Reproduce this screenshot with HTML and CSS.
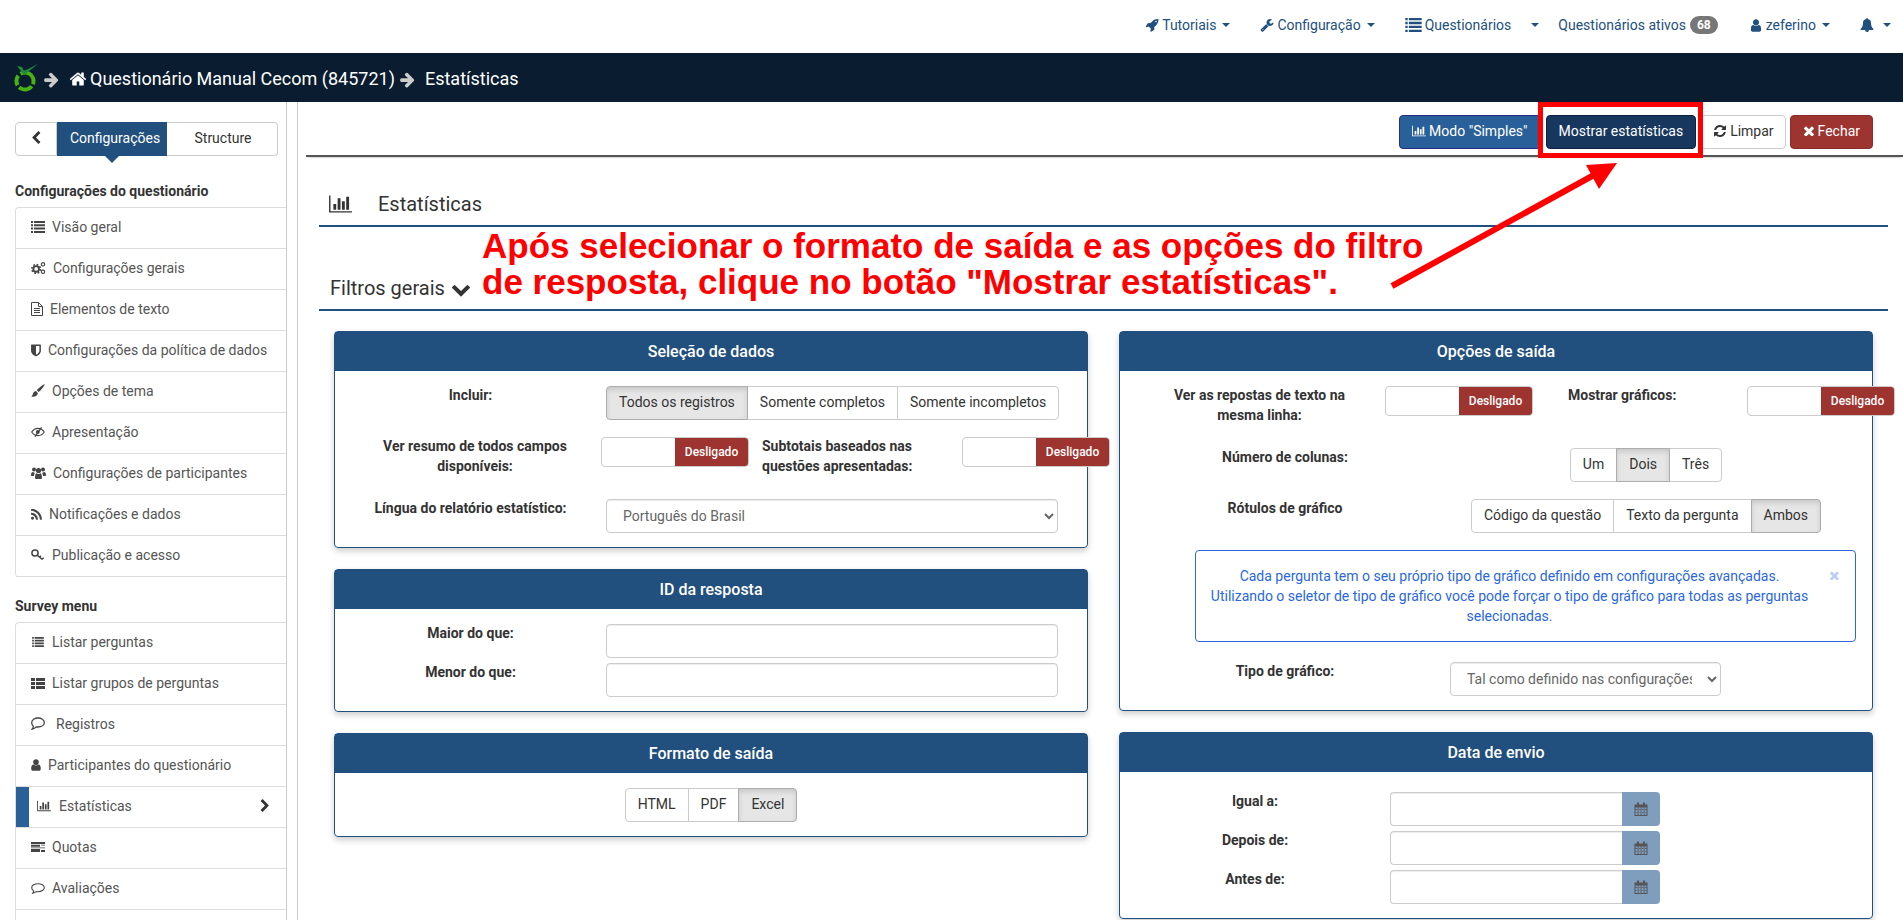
FILE: index.html
```html
<!DOCTYPE html>
<html lang="pt-br">

<head>
    <meta charset="UTF-8">
    <meta name="viewport" content="width=device-width, initial-scale=1.0">
    <title>Estatísticas</title>
    <link rel="stylesheet" href="styles.css">
</head>

<body>
    <svg class="icon-defs" aria-hidden="true">
        <symbol id="i-rocket" viewBox="0 0 1792 1792"><path d="M1504 448q0-40-28-68t-68-28-68 28-28 68 28 68 68 28 68-28 28-68zm224-288q0 249-75.5 430.5t-253.5 360.5q-81 80-195 176l-20 379q-2 16-16 26l-384 224q-7 4-16 4-12 0-23-9l-64-64q-13-14-8-32l85-276-281-281-276 85q-3 1-9 1-14 0-23-9l-64-64q-17-19-5-39l224-384q10-14 26-16l379-20q96-114 176-195 188-187 358-258t431-71q14 0 24 9.5t10 22.5z"/></symbol>
        <symbol id="i-wrench" viewBox="0 0 1792 1792"><path d="M448 1472q0-26-19-45t-45-19-45 19-19 45 19 45 45 19 45-19 19-45zm644-420l-682 682q-37 37-90 37-52 0-91-37l-106-108q-38-36-38-90 0-53 38-91l681-681q39 98 114.5 173.5t173.5 114.5zm634-435q0 39-23 106-47 134-164.5 217.5t-258.5 83.5q-185 0-316.5-131.5t-131.5-316.5 131.5-316.5 316.5-131.5q58 0 121.5 16.5t107.5 46.5q16 11 16 28t-16 28l-293 169v224l193 107q5-3 79-48.5t135.5-81 70.5-35.5q15 0 23.5 10t8.5 25z"/></symbol>
        <symbol id="i-list" viewBox="0 0 14 12"><path d="M0 0h2v2H0zM3 0h11v2H3zM0 3.300h2v2H0zM3 3.300h11v2H3zM0 6.600h2v2H0zM3 6.600h11v2H3zM0 10h2v2H0zM3 10h11v2H3z"/></symbol>
        <symbol id="i-th-list" viewBox="0 0 14 11"><path d="M0 0h4v3H0zM5 0h9v3H5zM0 4h4v3H0zM5 4h9v3H5zM0 8h4v3H0zM5 8h9v3H5z"/></symbol>
        <symbol id="i-user" viewBox="300 100 1200 1600"><path d="M1536 1399q0 109-62.500 187t-150.500 78h-854q-88 0-150.500-78t-62.500-187q0-85 8.500-160.500t31.500-152 58.500-131 94-89 134.500-34.500q131 128 313 128t313-128q76 0 134.500 34.500t94 89 58.500 131 31.500 152 8.500 160.500zm-256-887q0 159-112.500 271.500t-271.500 112.500-271.500-112.500-112.500-271.500 112.500-271.500 271.500-112.500 271.500 112.500 112.500 271.500z"/></symbol>
        <symbol id="i-bell" viewBox="0 0 1792 1792"><path d="M912 1696q0-16-16-16-59 0-101.500-42.500t-42.500-101.500q0-16-16-16t-16 16q0 73 51.500 124.500t124.500 51.500q16 0 16-16zm816-288q0 52-38 90t-90 38h-448q0 106-75 181t-181 75-181-75-75-181h-448q-52 0-90-38t-38-90q50-42 91-88t85-119.500 74.500-158.500 50-206 19.500-260q0-152 117-282.500t307-158.500q-8-19-8-39 0-40 28-68t68-28 68 28 28 68q0 20-8 39 190 28 307 158.500t117 282.500q0 139 19.500 260t50 206 74.500 158.500 85 119.500 91 88z"/></symbol>
        <symbol id="i-home" viewBox="0 0 1792 1792"><path d="M1472 992v480q0 26-19 45t-45 19h-384v-384h-256v384h-384q-26 0-45-19t-19-45v-480q0-1 .5-3t.5-3l575-474 575 474q1 2 1 6zm223-69l-62 74q-8 9-21 11h-3q-13 0-21-7l-692-577-692 577q-12 8-24 7-13-2-21-11l-62-74q-8-10-7-23.500t11-21.500l719-599q32-26 76-26t76 26l244 204v-195q0-14 9-23t23-9h192q14 0 23 9t9 23v408l219 182q10 8 11 21.500t-7 23.500z"/></symbol>
        <symbol id="i-arrow-right" viewBox="0 0 1792 1792"><path d="M1600 960q0 54-37 91l-651 651q-39 37-91 37-51 0-90-37l-75-75q-38-38-38-91t38-91l293-293h-704q-52 0-84.500-37.500t-32.500-90.500v-128q0-53 32.500-90.500t84.500-37.500h704l-293-294q-38-36-38-90t38-90l75-75q38-38 90-38 53 0 91 38l651 651q37 35 37 90z"/></symbol>
        <symbol id="i-chart" viewBox="0 0 2048 1792"><path d="M640 896v512h-256v-512h256zm384-512v1024h-256v-1024h256zm1024 1152v128h-2048v-1536h128v1408h1920zm-640-896v768h-256v-768h256zm384-384v1152h-256v-1152h256z"/></symbol>
        <symbol id="i-chevron-left" viewBox="0 0 1792 1792"><path d="M1427 301l-531 531 531 531q19 19 19 45t-19 45l-166 166q-19 19-45 19t-45-19l-742-742q-19-19-19-45t19-45l742-742q19-19 45-19t45 19l166 166q19 19 19 45t-19 45z"/></symbol>
        <symbol id="i-chevron-right" viewBox="0 0 1792 1792"><path d="M1363 877l-742 742q-19 19-45 19t-45-19l-166-166q-19-19-19-45t19-45l531-531-531-531q-19-19-19-45t19-45l166-166q19-19 45-19t45 19l742 742q19 19 19 45t-19 45z"/></symbol>
        <symbol id="i-chevron-down" viewBox="0 0 1792 1792"><path d="M1683 808l-742 741q-19 19-45 19t-45-19l-742-741q-19-19-19-45.500t19-45.500l166-165q19-19 45-19t45 19l531 531 531-531q19-19 45-19t45 19l166 165q19 19 19 45.500t-19 45.500z"/></symbol>
        <symbol id="i-times" viewBox="300 300 1200 1200"><path d="M1490 1322q0 40-28 68l-136 136q-28 28-68 28t-68-28l-294-294-294 294q-28 28-68 28t-68-28l-136-136q-28-28-28-68t28-68l294-294-294-294q-28-28-28-68t28-68l136-136q28-28 68-28t68 28l294 294 294-294q28-28 68-28t68 28l136 136q28 28 28 68t-28 68l-294 294 294 294q28 28 28 68z"/></symbol>
        <symbol id="i-refresh" viewBox="0 0 1792 1792"><path d="M1639 1056q0 5-1 7-64 268-268 434.500t-478 166.500q-146 0-282.500-55t-243.500-157l-129 129q-19 19-45 19t-45-19-19-45v-448q0-26 19-45t45-19h448q26 0 45 19t19 45-19 45l-137 137q71 66 161 102t187 36q134 0 250-65t186-179q11-17 53-117 8-23 30-23h192q13 0 22.500 9.500t9.500 22.500zm25-800v448q0 26-19 45t-45 19h-448q-26 0-45-19t-19-45 19-45l138-138q-148-137-349-137-134 0-250 65t-186 179q-11 17-53 117-8 23-30 23h-199q-13 0-22.500-9.500t-9.500-22.500v-7q65-268 270-434.500t480-166.500q146 0 284 55.500t245 156.500l130-129q19-19 45-19t45 19 19 45z"/></symbol>
        <symbol id="i-shield" viewBox="250 100 1300 1600"><path d="M1344 960v-640h-448v1137q119-63 213-137 235-184 235-360zm192-768v768q0 86-33.500 170.500t-83 150-118 127.500-126.500 103-121 77.500-89.500 49.500-42.500 20q-12 6-26 6t-26-6q-16-7-42.500-20t-89.500-49.500-121-77.500-126.500-103-118-127.500-83-150-33.500-170.500v-768q0-26 19-45t45-19h1152q26 0 45 19t19 45z"/></symbol>
        <symbol id="i-rss" viewBox="190 190 1420 1360"><path d="M576 1344q0 80-56 136t-136 56-136-56-56-136 56-136 136-56 136 56 56 136zm512 123q2 28-17 48-18 21-47 21h-135q-25 0-43-16.500t-20-41.500q-22-229-184.500-391.500t-391.500-184.500q-25-2-41.500-20t-16.500-43v-135q0-29 21-47 17-17 43-17h5q160 13 306 80.500t259 181.500q114 113 181.500 259t80.500 306zm512 2q2 27-18 47-18 20-46 20h-143q-26 0-44.500-17.500t-19.500-42.500q-12-215-101-408.500t-231.500-336-336-231.500-408.500-102q-25-1-42.500-19.500t-17.500-43.500v-143q0-28 20-46 18-18 44-18h3q262 13 501.500 120t425.500 294q187 186 294 425.500t120 501.500z"/></symbol>
        <symbol id="i-cogs" viewBox="0 0 16 14"><circle cx="5.500" cy="8" r="3" fill="none" stroke="currentColor" stroke-width="2"/><circle cx="5.500" cy="8" r="4.600" fill="none" stroke="currentColor" stroke-width="1.800" stroke-dasharray="1.800 1.800"/><circle cx="12.800" cy="3" r="1.800" fill="none" stroke="currentColor" stroke-width="1.200"/><circle cx="12.800" cy="11" r="1.800" fill="none" stroke="currentColor" stroke-width="1.200"/></symbol>
        <symbol id="i-file" viewBox="0 0 12 14"><path d="M.5.500h7l4 4v9H.5z M7.500.500v4h4 M3 6.500h6 M3 8.500h6 M3 10.500h6" fill="none" stroke="currentColor"/></symbol>
        <symbol id="i-brush" viewBox="0 0 14 14"><path d="M13.600.400c.4.500-3.400 5.600-6 7.600L5.800 6.300C8 3.700 13 0 13.600.400zM5 7.100l1.800 1.800C6.800 11.500 4 13 0 12.800c1.400-.8 1.600-2 2-3.300.5-1.400 1.700-2.400 3-2.400z"/></symbol>
        <symbol id="i-eye" viewBox="0 0 14 10"><path d="M.7 5C2.300 2.600 4.500 1.400 7 1.400s4.700 1.200 6.300 3.600C11.700 7.400 9.500 8.600 7 8.600S2.300 7.400.7 5z" fill="none" stroke="currentColor" stroke-width="1.100"/><circle cx="6.800" cy="5" r="1.900"/><path d="M4 9.600L10.500.4" stroke="currentColor" stroke-width="1.300"/></symbol>
        <symbol id="i-users" viewBox="0 0 15 12"><circle cx="3" cy="2.500" r="2"/><circle cx="12" cy="2.500" r="2"/><circle cx="7.500" cy="3.500" r="2.600"/><path d="M0 8c0-2 .8-3 2-3 .6.500 1 .7 1.800.7C3.300 7 3 8 3 9H1C.4 9 0 8.700 0 8zM15 8c0-2-.8-3-2-3-.6.500-1 .7-1.800.7.500 1.300.8 2.300.8 3.300h2c.6 0 1-.3 1-1zM4 10.500C4 8 4.800 6.300 5.500 6.200c1.200.9 2.800.9 4 0 .7.100 1.500 1.800 1.500 4.300 0 1-.6 1.500-1.500 1.500h-4C4.600 12 4 11.500 4 10.500z"/></symbol>
        <symbol id="i-key" viewBox="0 0 14 12"><circle cx="4" cy="4" r="3.100" fill="none" stroke="currentColor" stroke-width="1.500"/><path d="M6 6l5 4.200M8.500 8.200l1.400-1.400M11 10.200l1.600-1.500" fill="none" stroke="currentColor" stroke-width="1.500"/></symbol>
        <symbol id="i-comment" viewBox="0 0 14 11"><path d="M7 .7c3.400 0 6.300 1.700 6.300 4s-2.900 4-6.300 4c-.6 0-1.200 0-1.800-.1C4.200 9.500 2.800 10 1.700 10.200c.5-.7.900-1.400 1-2.300C1.500 7.100.7 6 .7 4.700c0-2.300 2.900-4 6.300-4z" fill="none" stroke="currentColor" stroke-width="1.100"/></symbol>
        <symbol id="i-comment-wide" viewBox="0 0 18 14"><path d="M7 1c3.400 0 6.300 1.700 6.300 4.500S10.400 10 7 10c-.6 0-1.200 0-1.800-.1C4.200 11 2.800 11.700 1.200 12c.7-.8 1.100-1.700 1.200-2.700C1.300 8.500.7 7 .7 5.500.7 2.700 3.600 1 7 1z" fill="none" stroke="currentColor" stroke-width="1.300"/></symbol>
        <symbol id="i-quotas" viewBox="0 0 14 10"><path d="M0 0h14v2H0zM0 2.700h9v2H0zM10 2.700h4v.8h-4zM0 5.400h14v.9H0zM0 7h9v3H0zM10 8h4v2h-4z"/></symbol>
        <symbol id="i-calendar" viewBox="0 0 13 14"><path d="M0 2.500h13V14H0zM1 5.500v7.500h2.200V5.500zm3 0v7.500h2.200V5.500zm3 0v7.500h2.200V5.500zm3 0v7.500h2V5.500zM1 8h11V7.300H1zm0 2.600h11v-.7H1z" fill-rule="evenodd"/><path d="M2.500 .5h2v3.500h-2zM8.500 .5h2v3.500h-2z"/></symbol>
    </svg>

    <nav class="topnav">
        <a class="topnav-item"><svg class="icon nav-icon"><use href="#i-rocket"/></svg>Tutoriais<span class="caret"></span></a>
        <a class="topnav-item"><svg class="icon nav-icon"><use href="#i-wrench"/></svg>Configuração<span class="caret"></span></a>
        <a class="topnav-item"><svg class="icon nav-icon icon-wide"><use href="#i-list"/></svg>Questionários<span class="caret caret-far"></span></a>
        <a class="topnav-item item-tight">Questionários ativos<span class="badge">68</span></a>
        <a class="topnav-item"><svg class="icon nav-icon icon-user"><use href="#i-user"/></svg>zeferino<span class="caret"></span></a>
        <a class="topnav-item"><svg class="icon nav-icon"><use href="#i-bell"/></svg><span class="caret"></span></a>
    </nav>

    <header class="breadcrumb">
        <svg class="logo" width="25" height="29" viewBox="0 0 25 29">
            <circle cx="11" cy="18" r="8.500" fill="none" stroke="#46b312" stroke-width="4" stroke-dasharray="12 2.500 14 2.500 10 3" transform="rotate(-60 11 18)"/>
            <path d="M3 3l5 1 2 4L24 1 10 12 7 8z" fill="#1d8a3c"/>
        </svg>
        <svg class="icon crumb-arrow"><use href="#i-arrow-right"/></svg>
        <svg class="icon crumb-home"><use href="#i-home"/></svg>
        <span class="crumb-text">Questionário Manual Cecom (845721)</span>
        <svg class="icon crumb-arrow"><use href="#i-arrow-right"/></svg>
        <span class="crumb-last">Estatísticas</span>
    </header>

    <div class="layout">
        <aside class="sidebar">
            <div class="side-tabs">
                <button class="side-back"><svg class="icon"><use href="#i-chevron-left"/></svg></button>
                <button class="side-tab side-tab-active">Configurações</button>
                <button class="side-tab side-tab-last">Structure</button>
            </div>

            <h4 class="side-title">Configurações do questionário</h4>
            <ul class="side-list">
                <li><svg class="side-icon" width="14" height="12"><use href="#i-list"/></svg>Visão geral</li>
                <li><svg class="side-icon" width="15" height="14"><use href="#i-cogs"/></svg>Configurações gerais</li>
                <li><svg class="side-icon" width="12" height="14"><use href="#i-file"/></svg>Elementos de texto</li>
                <li><svg class="side-icon" width="10" height="13"><use href="#i-shield"/></svg>Configurações da política de dados</li>
                <li><svg class="side-icon" width="14" height="14"><use href="#i-brush"/></svg>Opções de tema</li>
                <li><svg class="side-icon" width="14" height="10"><use href="#i-eye"/></svg>Apresentação</li>
                <li><svg class="side-icon" width="15" height="12"><use href="#i-users"/></svg>Configurações de participantes</li>
                <li><svg class="side-icon" width="11" height="11"><use href="#i-rss"/></svg>Notificações e dados</li>
                <li><svg class="side-icon" width="14" height="12"><use href="#i-key"/></svg>Publicação e acesso</li>
            </ul>

            <h4 class="side-title side-title-next">Survey menu</h4>
            <ul class="side-list">
                <li><svg class="side-icon" width="14" height="10"><use href="#i-list"/></svg>Listar perguntas</li>
                <li><svg class="side-icon" width="14" height="11"><use href="#i-th-list"/></svg>Listar grupos de perguntas</li>
                <li><svg class="side-icon" width="18" height="14"><use href="#i-comment-wide"/></svg>Registros</li>
                <li><svg class="side-icon" width="10" height="12"><use href="#i-user"/></svg>Participantes do questionário</li>
                <li class="side-active"><svg class="side-icon icon-chart" width="16" height="12"><use href="#i-chart"/></svg>Estatísticas<svg class="side-chevron" width="14" height="14"><use href="#i-chevron-right"/></svg></li>
                <li><svg class="side-icon" width="14" height="10"><use href="#i-quotas"/></svg>Quotas</li>
                <li><svg class="side-icon" width="14" height="11"><use href="#i-comment"/></svg>Avaliações</li>
                <li></li>
            </ul>
        </aside>
        <div class="side-gutter"></div>

        <main class="content">
            <div class="toolbar">
                <button class="btn btn-blue"><svg class="icon btn-icon"><use href="#i-chart"/></svg>Modo "Simples"</button>
                <button class="btn btn-dark">Mostrar estatísticas</button>
                <button class="btn btn-white"><svg class="icon btn-icon"><use href="#i-refresh"/></svg>Limpar</button>
                <button class="btn btn-red"><svg class="icon btn-icon btn-icon-x"><use href="#i-times"/></svg>Fechar</button>
            </div>

            <h3 class="page-title"><svg class="icon title-icon"><use href="#i-chart"/></svg>Estatísticas</h3>
            <h4 class="filter-title">Filtros gerais<svg class="icon filter-chevron"><use href="#i-chevron-down"/></svg></h4>

            <div class="panels">
                <div class="panel-col">
                    <section class="panel">
                        <div class="panel-head">Seleção de dados</div>
                        <div class="panel-body">
                            <div class="row row-left row-gap-a">
                                <label>Incluir:</label>
                                <div class="group">
                                    <span class="seg seg-on">Todos os registros</span><span class="seg">Somente completos</span><span class="seg">Somente incompletos</span>
                                </div>
                            </div>
                            <div class="row row-switches-left row-gap-b">
                                <label class="label-narrow">Ver resumo de todos campos disponíveis:</label>
                                <div class="switch"><span class="switch-off">Desligado</span></div>
                                <label class="label-side">Subtotais baseados nas questões apresentadas:</label>
                                <div class="switch"><span class="switch-off">Desligado</span></div>
                            </div>
                            <div class="row row-left">
                                <label>Língua do relatório estatístico:</label>
                                <select class="field"><option>Português do Brasil</option></select>
                            </div>
                        </div>
                    </section>

                    <section class="panel">
                        <div class="panel-head">ID da resposta</div>
                        <div class="panel-body">
                            <div class="row row-left row-gap-c">
                                <label>Maior do que:</label>
                                <input class="field" type="text">
                            </div>
                            <div class="row row-left">
                                <label>Menor do que:</label>
                                <input class="field" type="text">
                            </div>
                        </div>
                    </section>

                    <section class="panel">
                        <div class="panel-head">Formato de saída</div>
                        <div class="panel-body panel-center">
                            <div class="group">
                                <span class="seg">HTML</span><span class="seg">PDF</span><span class="seg seg-on">Excel</span>
                            </div>
                        </div>
                    </section>
                </div>

                <div class="panel-col">
                    <section class="panel">
                        <div class="panel-head">Opções de saída</div>
                        <div class="panel-body">
                            <div class="row row-switches-right row-gap-b">
                                <label class="label-narrow">Ver as repostas de texto na mesma linha:</label>
                                <div class="switch"><span class="switch-off">Desligado</span></div>
                                <label class="label-side label-side-far">Mostrar gráficos:</label>
                                <div class="switch"><span class="switch-off">Desligado</span></div>
                            </div>
                            <div class="row row-right row-gap-a">
                                <label>Número de colunas:</label>
                                <div class="group-wrap">
                                    <div class="group">
                                        <span class="seg">Um</span><span class="seg seg-on">Dois</span><span class="seg">Três</span>
                                    </div>
                                </div>
                            </div>
                            <div class="row row-right">
                                <label>Rótulos de gráfico</label>
                                <div class="group-wrap">
                                    <div class="group">
                                        <span class="seg">Código da questão</span><span class="seg">Texto da pergunta</span><span class="seg seg-on">Ambos</span>
                                    </div>
                                </div>
                            </div>
                            <div class="alert">
                                Cada pergunta tem o seu próprio tipo de gráfico definido em configurações avançadas.<br>
                                Utilizando o seletor de tipo de gráfico você pode forçar o tipo de gráfico para todas as perguntas selecionadas.
                                <svg class="icon alert-close"><use href="#i-times"/></svg>
                            </div>
                            <div class="row row-right">
                                <label>Tipo de gráfico:</label>
                                <select class="field field-short"><option>Tal como definido nas configurações avançadas</option></select>
                            </div>
                        </div>
                    </section>

                    <section class="panel">
                        <div class="panel-head">Data de envio</div>
                        <div class="panel-body panel-dates">
                            <div class="row row-date">
                                <label>Igual a:</label>
                                <div class="date-field"><input type="text"><span class="date-addon"><svg class="icon"><use href="#i-calendar"/></svg></span></div>
                            </div>
                            <div class="row row-date">
                                <label>Depois de:</label>
                                <div class="date-field"><input type="text"><span class="date-addon"><svg class="icon"><use href="#i-calendar"/></svg></span></div>
                            </div>
                            <div class="row row-date">
                                <label>Antes de:</label>
                                <div class="date-field"><input type="text"><span class="date-addon"><svg class="icon"><use href="#i-calendar"/></svg></span></div>
                            </div>
                        </div>
                    </section>
                </div>
            </div>
        </main>
    </div>

    <!-- anotacao em vermelho por cima da tela -->
    <p class="note">Após selecionar o formato de saída e as opções do filtro<br>de resposta, clique no botão "Mostrar estatísticas".</p>
    <div class="note-box"></div>
    <svg class="note-arrow" width="1903" height="920" viewBox="0 0 1903 920">
        <path d="M1392 286L1594 175" stroke="#f00" stroke-width="6" fill="none"/>
        <path d="M1617 163L1586 165 1599 189z" fill="#f00"/>
    </svg>
</body>

</html>
```

FILE: styles.css
```css
html, body {
    height: 920px;
    overflow: hidden;
}

body {
    margin: 0;
    position: relative;
    font-family: Roboto, "Liberation Sans", sans-serif;
    font-size: 14px;
    line-height: 20px;
    color: #333;
    background-color: #fff;
}

.icon-defs {
    display: none;
}

.icon {
    width: 14px;
    height: 14px;
    fill: currentColor;
    flex: none;
}

/* barra de cima */
.topnav {
    display: flex;
    justify-content: flex-end;
    align-items: center;
    box-sizing: border-box;
    height: 53px;
    padding: 0 0 3px;
    color: #22507e;
}

.topnav-item {
    display: flex;
    align-items: center;
    padding: 0 15px;
}

.topnav-item:last-child {
    margin-right: -3px;
}

.item-tight {
    padding: 0 18px 0 4px;
}

.nav-icon {
    margin-right: 3px;
}

.icon-wide {
    width: 17px;
}

.icon-user {
    width: 10px;
    height: 13px;
    margin-right: 5px;
}

.caret {
    width: 0;
    height: 0;
    margin-left: 6px;
    border-top: 4px solid #22507e;
    border-left: 4px solid transparent;
    border-right: 4px solid transparent;
}

.caret-far {
    margin-left: 20px;
}

.badge {
    margin-left: 4px;
    padding: 0 7px;
    height: 18px;
    line-height: 18px;
    border-radius: 9px;
    font-size: 12px;
    font-weight: 700;
    color: #fff;
    background-color: #777;
}

/* faixa escura */
.breadcrumb {
    display: flex;
    align-items: center;
    box-sizing: border-box;
    height: 49px;
    padding: 3px 0 0 14px;
    font-size: 18px;
    color: #fff;
    background-color: #0a1c30;
}

.logo {
    margin: -4px 4px 0 0;
}

.crumb-arrow {
    width: 17px;
    height: 17px;
    color: #ccc;
}

.crumb-home {
    width: 18px;
    height: 18px;
    margin: 0 3px 0 9px;
}

.crumb-text {
    margin-right: 4px;
}

.crumb-last {
    margin-left: 9px;
}

.layout {
    display: flex;
}

/* menu lateral */
.sidebar {
    width: 271px;
    padding-left: 15px;
    flex: none;
}

.side-gutter {
    width: 10px;
    height: 818px;
    flex: none;
    border-left: 1px solid #ccc;
    border-right: 1px solid #ccc;
}

.side-tabs {
    display: flex;
    height: 34px;
    margin-top: 20px;
    width: 263px;
}

.side-tabs button {
    height: 34px;
    padding: 0 0 2px;
    font-family: inherit;
    font-size: 14px;
    color: #333;
    background-color: #fff;
    border: 1px solid #ccc;
}

.side-back {
    width: 42px;
    border-radius: 4px 0 0 4px;
}

.side-back .icon {
    width: 14px;
    height: 14px;
    margin-top: 3px;
}

.side-tabs .side-tab-active {
    position: relative;
    width: 110px;
    padding-left: 6px;
    color: #fff;
    background-color: #22507e;
    border-color: #22507e;
}

.side-tab-active::after {
    content: "";
    position: absolute;
    left: 50%;
    bottom: -8px;
    margin-left: -7px;
    border-top: 7px solid #22507e;
    border-left: 7px solid transparent;
    border-right: 7px solid transparent;
}

.side-tabs .side-tab-last {
    width: 111px;
    padding-left: 2px;
    border-left: none;
    border-radius: 0 4px 4px 0;
}

.side-title {
    margin: 25px 0 6px;
    font-size: 14px;
    font-weight: 700;
    line-height: 20px;
}

.side-title-next {
    margin-top: 19px;
}

.side-list {
    margin: 0;
    padding: 0;
    list-style: none;
    border-top: 1px solid #ddd;
    border-left: 1px solid #ddd;
    border-radius: 4px 0 0 4px;
}

.side-list li {
    display: flex;
    align-items: center;
    box-sizing: border-box;
    height: 41px;
    padding: 0 0 2px 15px;
    color: #555;
    border-bottom: 1px solid #ddd;
}

.side-icon {
    margin-right: 7px;
    fill: #444;
    color: #444;
    flex: none;
}

.side-list .side-active {
    position: relative;
    padding-left: 20px;
}

.side-active::before {
    content: "";
    position: absolute;
    left: 0;
    top: 0;
    bottom: 0;
    width: 13px;
    background-color: #2a6099;
}

.side-chevron {
    margin-left: auto;
    margin-right: 14px;
    fill: #333;
}

/* conteudo */
.content {
    flex: 1;
    min-width: 0;
}

.toolbar {
    display: flex;
    justify-content: flex-end;
    align-items: flex-start;
    gap: 4px;
    height: 40px;
    margin-left: 8px;
    padding: 13px 30px 0 0;
    box-shadow: 0 2px 0 #555, 0 4px 2px -2px #999;
}

.btn {
    display: flex;
    align-items: center;
    height: 34px;
    padding: 0 12px 2px;
    font-family: inherit;
    font-size: 14px;
    color: #fff;
    border: 1px solid transparent;
    border-radius: 4px;
}

.btn-blue {
    margin-right: 1px;
    background-color: #2a6099;
    border-color: #262d85;
}

.btn-dark {
    background-color: #17375e;
    border-color: #0c2340;
}

.btn-white {
    padding-right: 11px;
    color: #333;
    background-color: #fff;
    border-color: #ccc;
}

.btn-red {
    padding-left: 13px;
    background-color: #9e3430;
    border-color: #8c2c28;
}

.btn-icon {
    margin-right: 3px;
}

.btn-icon-x {
    width: 10px;
    height: 10px;
    margin-right: 4px;
}

.page-title {
    display: flex;
    align-items: center;
    margin: 33px 15px 0 21px;
    padding: 0 0 5px 10px;
    font-size: 20px;
    font-weight: 400;
    line-height: 32px;
    border-bottom: 2px solid #22507e;
}

.title-icon {
    width: 23px;
    height: 20px;
    margin-right: 26px;
}

.filter-title {
    display: flex;
    align-items: center;
    margin: 45px 15px 0 21px;
    padding: 0 0 5px 11px;
    font-size: 20px;
    font-weight: 400;
    line-height: 32px;
    border-bottom: 2px solid #22507e;
}

.filter-chevron {
    width: 20px;
    height: 20px;
    margin-left: 6px;
    margin-top: 2px;
}

.panels {
    display: grid;
    grid-template-columns: 754px 754px;
    gap: 31px;
    margin: 20px 0 0 36px;
}

.panel {
    margin-bottom: 21px;
    border: 1px solid #22507e;
    border-radius: 4px;
    box-shadow: 0 3px 6px rgba(0, 0, 0, 0.2);
}

.panel-head {
    height: 39px;
    line-height: 39px;
    text-align: center;
    font-size: 16px;
    font-weight: 500;
    color: #fff;
    background-color: #22507e;
}

.panel-body {
    padding: 14px 0;
}

.panel-center {
    display: flex;
    justify-content: center;
}

.panel-dates {
    padding-top: 20px;
}

.row {
    display: grid;
}

.row label {
    font-weight: 700;
    text-align: center;
}

.row-left {
    grid-template-columns: 271px 452px;
}

.row-right {
    grid-template-columns: 330px 392px;
}

.row-switches-left {
    grid-template-columns: 266px 148px 213px 148px;
}

.row-switches-right {
    grid-template-columns: 265px 148px 214px 148px;
}

.row-date {
    grid-template-columns: 270px 270px;
    margin-bottom: 5px;
}

.row-date label {
    margin-top: -1px;
}

.row-date:last-child {
    margin-bottom: 0;
}

.row-gap-a {
    margin-bottom: 16px;
}

.row-gap-b {
    margin-bottom: 22px;
}

.row-gap-c {
    margin-bottom: 4px;
}

.row .label-narrow {
    padding: 0 30px 0 44px;
}

.row .label-side {
    padding-left: 13px;
    padding-right: 30px;
    text-align: left;
}

.row .label-side-far {
    padding-left: 35px;
}

.group-wrap {
    display: flex;
    justify-content: center;
}

.group {
    display: inline-flex;
    height: 34px;
    margin-top: 1px;
    justify-self: start;
    white-space: nowrap;
}

.seg {
    display: block;
    padding: 0 12px;
    line-height: 30px;
    background-color: #fff;
    border: 1px solid #ccc;
    margin-left: -1px;
}

.seg:first-child {
    margin-left: 0;
    border-radius: 4px 0 0 4px;
}

.seg:last-child {
    border-radius: 0 4px 4px 0;
}

.seg-on {
    position: relative;
    background-color: #e6e6e6;
    border-color: #adadad;
    box-shadow: inset 0 3px 5px rgba(0, 0, 0, 0.125);
}

.switch {
    display: flex;
    justify-content: flex-end;
    height: 28px;
    margin-top: 1px;
    border: 1px solid #ccc;
    border-radius: 4px;
    background-color: #fff;
}

.switch-off {
    width: 50%;
    text-align: center;
    line-height: 28px;
    font-size: 12px;
    font-weight: 500;
    color: #fff;
    background-color: #9e3430;
    border-radius: 0 3px 3px 0;
}

.field {
    box-sizing: border-box;
    width: 452px;
    height: 34px;
    margin: 1px 0 0;
    padding: 6px 12px;
    font-family: inherit;
    font-size: 14px;
    color: #666;
    background-color: #fff;
    border: 1px solid #ccc;
    border-radius: 4px;
    box-shadow: inset 0 1px 1px rgba(0, 0, 0, 0.075);
}

.field-short {
    width: 271px;
}

.alert {
    position: relative;
    margin: 17px 16px 19px 75px;
    padding: 15px 42px 15px 10px;
    text-align: center;
    color: #2a67e0;
    border: 1px solid #2a67e0;
    border-radius: 4px;
}

.alert-close {
    position: absolute;
    top: 20px;
    right: 16px;
    width: 9px;
    height: 9px;
    color: #bcd0f6;
}

.date-field {
    display: flex;
    height: 34px;
}

.date-field input {
    box-sizing: border-box;
    flex: 1;
    min-width: 0;
    height: 34px;
    border: 1px solid #ccc;
    border-right: none;
    border-radius: 4px 0 0 4px;
    box-shadow: inset 0 1px 1px rgba(0, 0, 0, 0.075);
}

.date-addon {
    display: flex;
    align-items: center;
    justify-content: center;
    width: 38px;
    color: #555;
    background-color: #7f9dbd;
    border-radius: 0 4px 4px 0;
}

/* anotacao */
.note {
    position: absolute;
    left: 482px;
    top: 228px;
    margin: 0;
    font-family: "Liberation Sans", Arial, sans-serif;
    font-size: 35px;
    font-weight: 700;
    line-height: 36px;
    color: #f00;
    white-space: nowrap;
}

.note-box {
    position: absolute;
    left: 1538px;
    top: 102px;
    width: 155px;
    height: 46px;
    border: 5px solid #f00;
}

.note-arrow {
    position: absolute;
    left: 0;
    top: 0;
    pointer-events: none;
}
```
